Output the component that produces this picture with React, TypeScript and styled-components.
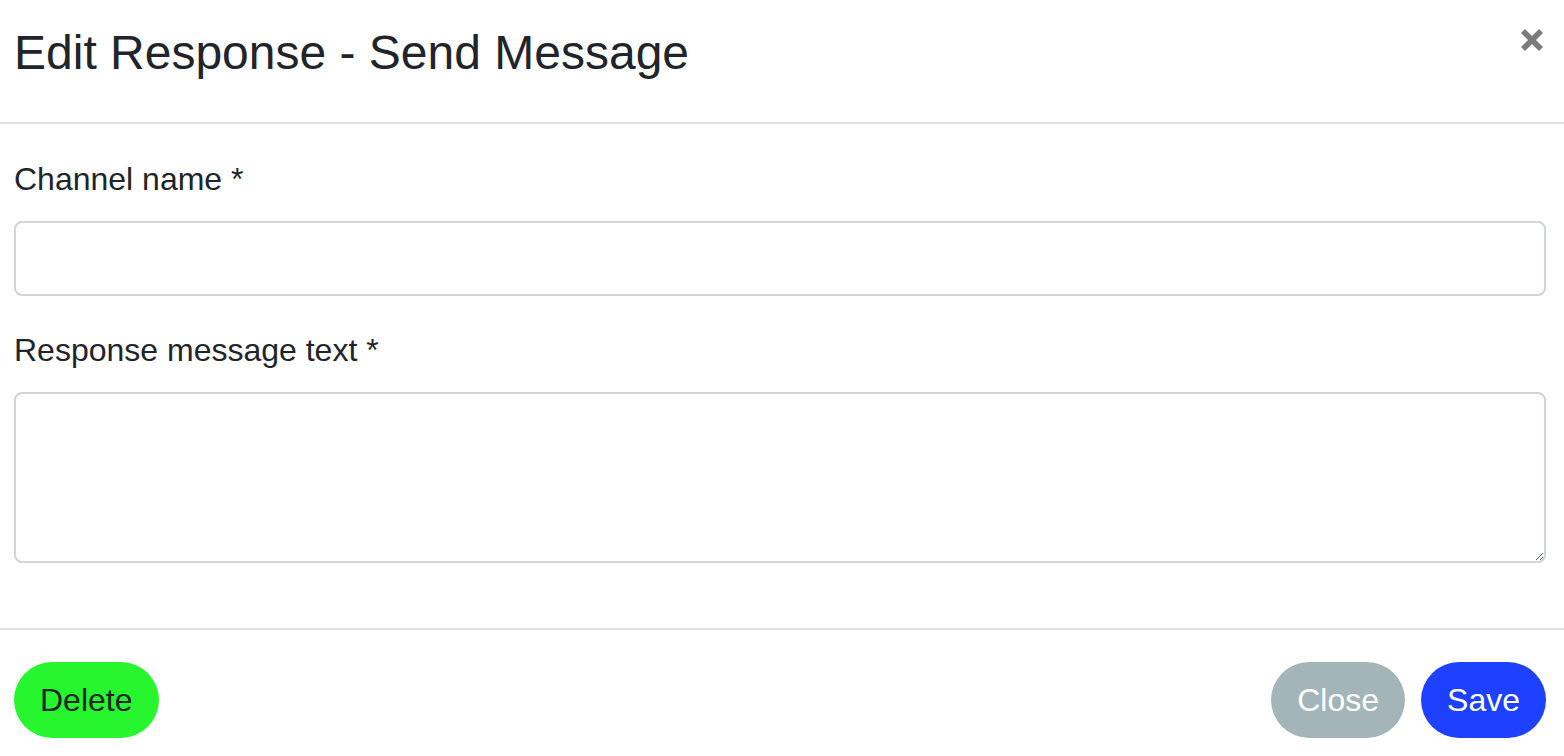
import React from "react";
import styled, { createGlobalStyle } from "styled-components";

const Global = createGlobalStyle`
  html, body { margin: 0; padding: 0; background: #fff; }
  body { font-family: "Liberation Sans", Arial, Helvetica, sans-serif; color: #212529; }
  * { box-sizing: border-box; }
`;

const Modal = styled.div`
  width: 1564px;
  height: 756px;
  display: flex;
  flex-direction: column;
  background: #fff;
  overflow: hidden;
`;

const Header = styled.div`
  height: 124px;
  display: flex;
  align-items: flex-start;
  justify-content: space-between;
  padding: 24px 21px 0 14px;
  border-bottom: 2px solid #dee2e6;
`;

const Title = styled.h4`
  margin: 0;
  font-size: 48px;
  font-weight: 400;
  line-height: 1.2;
  color: #212529;
`;

const CloseX = styled.button`
  width: 22px;
  height: 22px;
  margin-top: 5px;
  padding: 0;
  border: 0;
  background: transparent;
  cursor: pointer;
  display: flex;
  color: #7b7b7b;
`;

const Body = styled.div`
  padding: 31px 18px 65px 14px;
  display: flex;
  flex-direction: column;
  gap: 30px;
`;

const Group = styled.div`
  display: flex;
  flex-direction: column;
`;

const Label = styled.label`
  font-size: 32px;
  line-height: 48px;
  margin-bottom: 18px;
  color: #212529;
`;

const Input = styled.input`
  height: 75px;
  width: 100%;
  border: 2px solid #ced4da;
  border-radius: 8px;
  font-size: 32px;
  font-family: inherit;
  padding: 0 24px;
  outline: none;
`;

const TextArea = styled.textarea`
  height: 171px;
  width: 100%;
  border: 2px solid #ced4da;
  border-radius: 8px;
  font-size: 32px;
  font-family: inherit;
  padding: 12px 24px;
  resize: vertical;
  outline: none;
`;

const Footer = styled.div`
  border-top: 2px solid #dee2e6;
  padding: 32px 18px 0 14px;
  display: flex;
  align-items: center;
  justify-content: space-between;
`;

const Actions = styled.div`
  display: flex;
  gap: 16px;
`;

const Pill = styled.button<{ $bg: string; $fg: string }>`
  height: 76px;
  padding: 0 26px;
  border: 0;
  border-radius: 38px;
  background: ${(p) => p.$bg};
  color: ${(p) => p.$fg};
  font-family: "Liberation Sans", Arial, Helvetica, sans-serif;
  font-size: 32px;
  line-height: 1;
  cursor: pointer;
`;

export default function App() {
  return (
    <>
      <Global />
      <Modal>
        <Header>
          <Title>Edit Response - Send Message</Title>
          <CloseX aria-label="Close">
            <svg width="22" height="22" viewBox="0 0 22 22">
              <path
                d="M4 0 L11 7 L18 0 L22 4 L15 11 L22 18 L18 22 L11 15 L4 22 L0 18 L7 11 L0 4 Z"
                fill="currentColor"
              />
            </svg>
          </CloseX>
        </Header>
        <Body>
          <Group>
            <Label>Channel name *</Label>
            <Input type="text" />
          </Group>
          <Group>
            <Label>Response message text *</Label>
            <TextArea />
          </Group>
        </Body>
        <Footer>
          <Pill $bg="#27f52d" $fg="#212529">Delete</Pill>
          <Actions>
            <Pill $bg="#a3b5b8" $fg="#ffffff">Close</Pill>
            <Pill $bg="#1e40ff" $fg="#ffffff">Save</Pill>
          </Actions>
        </Footer>
      </Modal>
    </>
  );
}
